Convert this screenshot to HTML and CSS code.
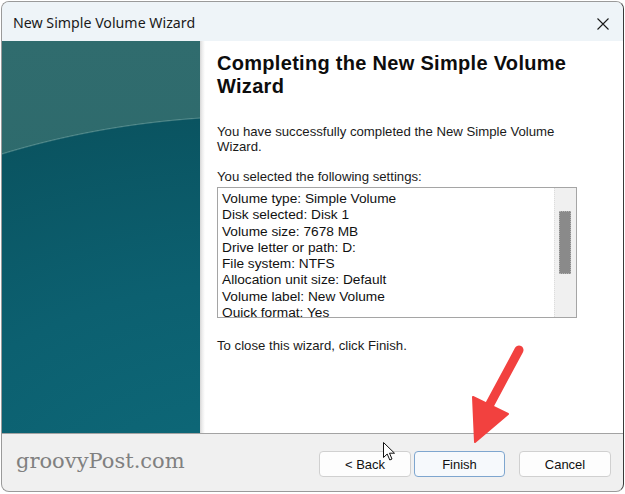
FILE: index.html
```html
<!DOCTYPE html>
<html>
<head>
  <title>New Simple Volume Wizard</title>
  <link rel="stylesheet" href="styles.css">
</head>
<body>
  <div class="window">
    <div class="titlebar">
      <span class="title">New Simple Volume Wizard</span>
      <svg class="close" width="12" height="12" viewBox="0 0 12 12">
        <path d="M0.5 0.5 L11.5 11.5 M11.5 0.5 L0.5 11.5" stroke="#1a1a1a" stroke-width="1.1" fill="none"/>
      </svg>
    </div>

    <div class="main">
      <div class="sidebar"></div>
      <div class="content">
        <h1>Completing the New Simple Volume Wizard</h1>
        <p class="intro">You have successfully completed the New Simple Volume Wizard.</p>
        <p class="label">You selected the following settings:</p>
        <div class="listbox">
          <div class="items">
            <div>Volume type: Simple Volume</div>
            <div>Disk selected: Disk 1</div>
            <div>Volume size: 7678 MB</div>
            <div>Drive letter or path: D:</div>
            <div>File system: NTFS</div>
            <div>Allocation unit size: Default</div>
            <div>Volume label: New Volume</div>
            <div>Quick format: Yes</div>
          </div>
          <div class="scrollbar">
            <div class="thumb"></div>
          </div>
        </div>
        <p class="closing">To close this wizard, click Finish.</p>
      </div>
    </div>

    <div class="footer">
      <span class="watermark">groovyPost.com</span>
      <div class="buttons">
        <button class="btn">&lt; Back</button>
        <button class="btn btn-default">Finish</button>
        <button class="btn btn-cancel">Cancel</button>
      </div>
    </div>
  </div>

  <!-- annotation arrow drawn over the screenshot -->
  <svg class="arrow" width="625" height="494" viewBox="0 0 625 494">
    <line x1="519" y1="350" x2="490" y2="404" stroke="#f2413f" stroke-width="9" stroke-linecap="round"/>
    <polygon points="473,397 508,414 475,442" fill="#f2413f" stroke="#f2413f" stroke-width="2" stroke-linejoin="round"/>
  </svg>

  <svg class="cursor" width="13" height="20" viewBox="0 0 13 20">
    <path d="M0.5 0.5 L0.5 15.5 L4.2 12 L6.8 18 L9 17 L6.5 11.2 L11.5 11.2 Z" fill="#fff" stroke="#111" stroke-width="1" stroke-linejoin="round"/>
  </svg>
</body>
</html>
```

FILE: styles.css
```css
* {
  margin: 0;
  padding: 0;
  box-sizing: border-box;
}

body {
  width: 625px;
  height: 494px;
  background: #fff;
  font-family: "Liberation Sans", Arial, sans-serif;
  color: #111;
  position: relative;
  overflow: hidden;
}

.window {
  width: 623px;
  height: 491px;
  margin: 1px 0 0 1px;
  border: 1px solid #9a9a9a;
  border-right-color: #3a3a3a;
  border-radius: 8px;
  overflow: hidden;
  display: flex;
  flex-direction: column;
  background: #f0f0f0;
}

.titlebar {
  height: 39px;
  flex: none;
  display: flex;
  align-items: center;
  justify-content: space-between;
  padding: 0 14px 0 11px;
  background: #eef4f8;
}

.title {
  font-family: "Noto Sans", sans-serif;
  font-size: 14.2px;
  color: #1a1a1a;
  margin-top: 1px;
}

.close {
  margin-top: 4px;
}

.main {
  height: 392px;
  flex: none;
  display: flex;
  background: #fff;
}

.sidebar {
  width: 198px;
  flex: none;
  background:
    radial-gradient(ellipse 627px 420px at 260px 494px, #0e6b7b 0%, #0c6070 60%, #0a5461 99.5%, rgba(110, 160, 160, 0.6) 99.8%, transparent 100%),
    linear-gradient(180deg, #306c6e 0%, #2c696b 60%, #27666a 100%);
}

.content {
  flex: 1;
  padding: 11px 0 0 17px;
  background: linear-gradient(90deg, #d6d6d6 0, #ececec 2px, #fff 5px);
}

h1 {
  font-family: "Liberation Sans", Arial, sans-serif;
  font-size: 20px;
  font-weight: bold;
  line-height: 23px;
  letter-spacing: 0.3px;
  width: 390px;
  color: #0d0d0d;
}

.intro,
.label,
.closing {
  font-size: 13.2px;
  line-height: 15px;
  color: #1a1a1a;
}

.intro {
  margin-top: 26px;
  width: 365px;
}

.label {
  margin-top: 15px;
}

.listbox {
  margin-top: 3px;
  width: 360px;
  height: 131px;
  border: 1px solid #a5a5a5;
  display: flex;
  background: #fff;
}

.items {
  flex: 1;
  overflow: hidden;
  padding: 3px 0 0 4px;
  font-size: 13.7px;
  line-height: 16.3px;
  color: #111;
  white-space: nowrap;
}

.scrollbar {
  width: 22px;
  flex: none;
  background: #f0f0f0;
  border-left: 1px dotted #dcdcdc;
  padding: 23px 0 0 4px;
}

.thumb {
  width: 12px;
  height: 63px;
  background: #8a8a8a;
  border: 1px dotted #b5b5b5;
}

.closing {
  margin-top: 20px;
}

.footer {
  flex: 1;
  border-top: 1px solid #a3a3a3;
  display: flex;
  align-items: center;
  justify-content: space-between;
  padding: 3px 12px 0 14px;
}

.watermark {
  font-family: "DejaVu Serif", Georgia, serif;
  font-size: 21px;
  color: #808080;
  margin-top: -7px;
}

.buttons {
  display: flex;
  gap: 3px;
}

.btn {
  width: 92px;
  height: 26px;
  font-family: "Liberation Sans", Arial, sans-serif;
  font-size: 13px;
  color: #111;
  background: #fdfdfd;
  border: 1px solid #d0d0d0;
  border-radius: 4px;
}

.btn-default {
  width: 91px;
  background: #f6f9fc;
  border-color: #7ea6cf;
}

.btn-cancel {
  margin-left: 11px;
}

.arrow {
  position: absolute;
  left: 0;
  top: 0;
}

.cursor {
  position: absolute;
  left: 383px;
  top: 442px;
}
```
